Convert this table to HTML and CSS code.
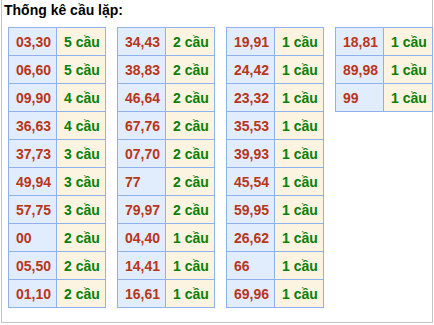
FILE: index.html
```html
<!DOCTYPE html>
<html>
<head>
<meta charset="utf-8">
<link rel="stylesheet" href="styles.css">
</head>
<body>
<div class="wrap">
  <div class="title">Thống kê cầu lặp:</div>
  <div class="tables">
    <table class="tk">
      <tr><td class="num">03,30</td><td class="cnt">5 cầu</td></tr>
      <tr><td class="num">06,60</td><td class="cnt">5 cầu</td></tr>
      <tr><td class="num">09,90</td><td class="cnt">4 cầu</td></tr>
      <tr><td class="num">36,63</td><td class="cnt">4 cầu</td></tr>
      <tr><td class="num">37,73</td><td class="cnt">3 cầu</td></tr>
      <tr><td class="num">49,94</td><td class="cnt">3 cầu</td></tr>
      <tr><td class="num">57,75</td><td class="cnt">3 cầu</td></tr>
      <tr><td class="num">00</td><td class="cnt">2 cầu</td></tr>
      <tr><td class="num">05,50</td><td class="cnt">2 cầu</td></tr>
      <tr><td class="num">01,10</td><td class="cnt">2 cầu</td></tr>
    </table>
    <table class="tk">
      <tr><td class="num">34,43</td><td class="cnt">2 cầu</td></tr>
      <tr><td class="num">38,83</td><td class="cnt">2 cầu</td></tr>
      <tr><td class="num">46,64</td><td class="cnt">2 cầu</td></tr>
      <tr><td class="num">67,76</td><td class="cnt">2 cầu</td></tr>
      <tr><td class="num">07,70</td><td class="cnt">2 cầu</td></tr>
      <tr><td class="num">77</td><td class="cnt">2 cầu</td></tr>
      <tr><td class="num">79,97</td><td class="cnt">2 cầu</td></tr>
      <tr><td class="num">04,40</td><td class="cnt">1 cầu</td></tr>
      <tr><td class="num">14,41</td><td class="cnt">1 cầu</td></tr>
      <tr><td class="num">16,61</td><td class="cnt">1 cầu</td></tr>
    </table>
    <table class="tk">
      <tr><td class="num">19,91</td><td class="cnt">1 cầu</td></tr>
      <tr><td class="num">24,42</td><td class="cnt">1 cầu</td></tr>
      <tr><td class="num">23,32</td><td class="cnt">1 cầu</td></tr>
      <tr><td class="num">35,53</td><td class="cnt">1 cầu</td></tr>
      <tr><td class="num">39,93</td><td class="cnt">1 cầu</td></tr>
      <tr><td class="num">45,54</td><td class="cnt">1 cầu</td></tr>
      <tr><td class="num">59,95</td><td class="cnt">1 cầu</td></tr>
      <tr><td class="num">26,62</td><td class="cnt">1 cầu</td></tr>
      <tr><td class="num">66</td><td class="cnt">1 cầu</td></tr>
      <tr><td class="num">69,96</td><td class="cnt">1 cầu</td></tr>
    </table>
    <table class="tk">
      <tr><td class="num">18,81</td><td class="cnt">1 cầu</td></tr>
      <tr><td class="num">89,98</td><td class="cnt">1 cầu</td></tr>
      <tr><td class="num">99</td><td class="cnt">1 cầu</td></tr>
    </table>
  </div>
</div>
</body>
</html>
```
FILE: styles.css
```css
html, body {
  margin: 0;
  padding: 0;
  background: #fff;
}
body {
  font-family: "Liberation Sans", Arial, sans-serif;
}
.wrap {
  margin-left: 1px;
  width: 432px;
  height: 323px;
  box-sizing: border-box;
  border: 1px solid #c4c4c4;
  border-top: none;
}
.title {
  font-size: 14px;
  font-weight: bold;
  color: #000;
  padding: 2px 0 0 2px;
  line-height: 16px;
  height: 27px;
  box-sizing: border-box;
}
.tables {
  display: flex;
  align-items: flex-start;
  gap: 11px;
  padding-left: 6px;
}
.tk {
  border-collapse: collapse;
  width: 98px;
  table-layout: fixed;
}
.tk td {
  border: 1px solid #8db2ee;
  height: 28px;
  padding: 0 0 0 7px;
  font-size: 14px;
  font-weight: bold;
  box-sizing: border-box;
  white-space: nowrap;
}
.tk td.num {
  width: 48px;
  background: #e1edfd;
  color: #b8361a;
}
.tk td.cnt {
  width: 49px;
  background: #fdf3e1;
  color: #08800a;
}
```
